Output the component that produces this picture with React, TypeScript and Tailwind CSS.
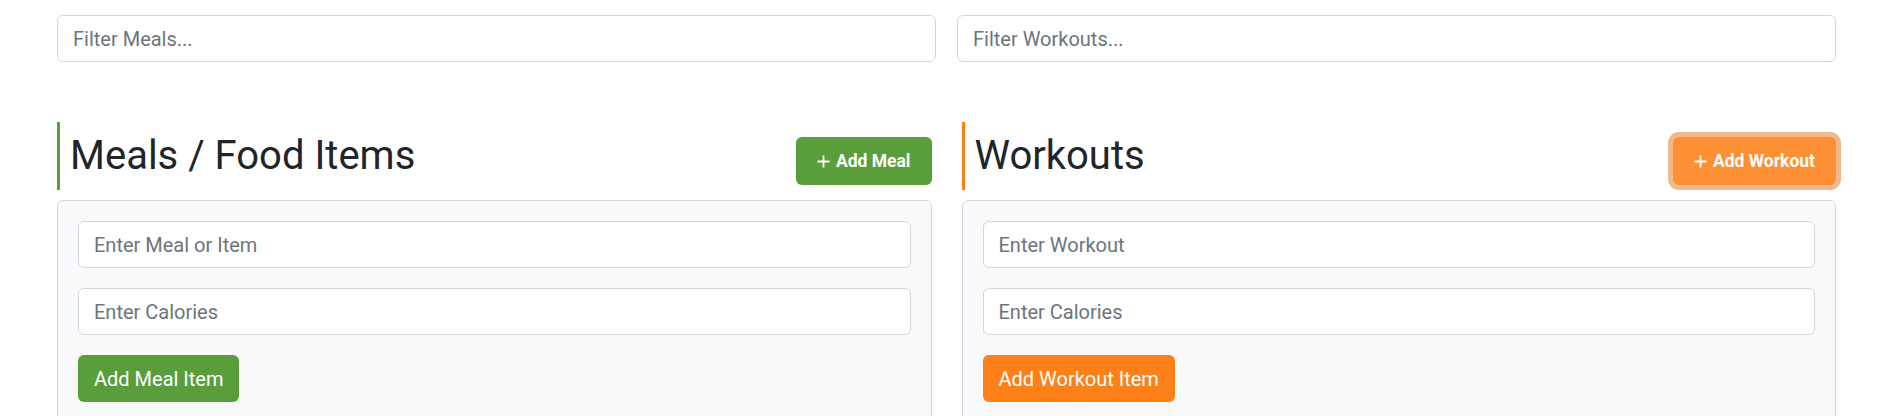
import { useState } from "react";

function PlusIcon() {
  return (
    <svg width="13" height="13" viewBox="0 0 13 13" className="shrink-0">
      <path d="M6.5 0.5V12.5M0.5 6.5H12.5" stroke="currentColor" strokeWidth="1.8" fill="none" />
    </svg>
  );
}

const inputCls =
  "h-[47px] w-full rounded-[6px] border border-[#d3d7dc] bg-white px-[15px] text-[20px] text-[#212529] placeholder:text-[#6c757d] outline-none";

type Section = {
  title: string;
  border: string;
  headBtn: string;
  headLabel: string;
  namePh: string;
  itemBtn: string;
  itemLabel: string;
};

const SECTIONS: Section[] = [
  {
    title: "Meals / Food Items",
    border: "border-[#5a9e3c]",
    headBtn: "bg-[#5a9e3c] px-[21px]",
    headLabel: "Add Meal",
    namePh: "Enter Meal or Item",
    itemBtn: "bg-[#5a9e3c]",
    itemLabel: "Add Meal Item",
  },
  {
    title: "Workouts",
    border: "border-[#fd7e14]",
    headBtn: "bg-[#fd9035] px-[21px] shadow-[0_0_0_5px_#f0b98b]",
    headLabel: "Add Workout",
    namePh: "Enter Workout",
    itemBtn: "bg-[#fd8118]",
    itemLabel: "Add Workout Item",
  },
];

function Panel({ s }: { s: Section }) {
  const [name, setName] = useState("");
  const [cal, setCal] = useState("");
  return (
    <div className="flex flex-col">
      <div className="flex items-end justify-between">
        <h2
          className={`border-l-[3px] ${s.border} py-[10px] pl-[10px] text-[40px] leading-[48px] font-normal text-[#212529]`}
        >
          {s.title}
        </h2>
        <button
          className={`mb-[5px] flex h-[48px] items-center gap-[6px] rounded-[6px] ${s.headBtn} text-[17.5px] font-bold text-white`}
        >
          <PlusIcon />
          {s.headLabel}
        </button>
      </div>
      <div className="mt-[10px] flex flex-col gap-[20px] rounded-[6px] border border-[#d3d7dc] bg-[#f8f9fa] p-[20px] pb-[40px]">
        <input
          className={inputCls}
          placeholder={s.namePh}
          value={name}
          onChange={(e) => setName(e.target.value)}
        />
        <input
          className={inputCls}
          placeholder="Enter Calories"
          value={cal}
          onChange={(e) => setCal(e.target.value)}
        />
        <button
          className={`h-[47px] self-start rounded-[6px] ${s.itemBtn} px-[16px] text-[20px] text-white`}
        >
          {s.itemLabel}
        </button>
      </div>
    </div>
  );
}

export default function App() {
  return (
    <div className="min-h-screen bg-white pl-[57px] pr-[56px] pt-[15px] font-['Roboto',sans-serif]">
      <div className="grid grid-cols-2 gap-x-[21px]">
        <input className={inputCls} placeholder="Filter Meals..." />
        <input className={inputCls} placeholder="Filter Workouts..." />
      </div>
      <div className="mt-[60px] grid grid-cols-2 gap-x-[30px]">
        {SECTIONS.map((s) => (
          <Panel key={s.title} s={s} />
        ))}
      </div>
    </div>
  );
}
